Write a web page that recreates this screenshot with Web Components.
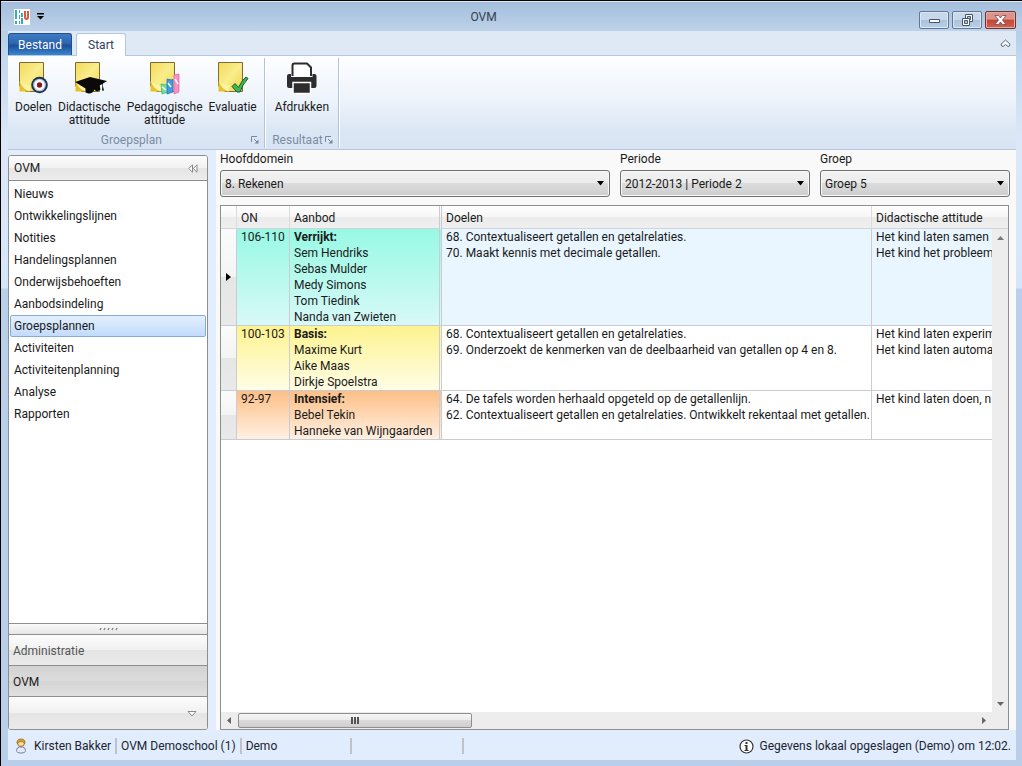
<!DOCTYPE html>
<html lang="nl">
<head>
<meta charset="utf-8">
<title>OVM</title>
<style>
html, body { margin: 0; height: 100%; }
body { font: 12px/16px Roboto, "Open Sans", "Noto Sans", sans-serif; color: #1a1a1a; overflow: hidden; }
</style>
</head>
<body>
<ovm-window>
  <ovm-titlebar slot="title">OVM</ovm-titlebar>
  <ovm-ribbon slot="ribbon">
    <ovm-ribbon-group label="Groepsplan">
      <ovm-ribbon-button icon="doelen">Doelen</ovm-ribbon-button>
      <ovm-ribbon-button icon="didactisch">Didactische<br>attitude</ovm-ribbon-button>
      <ovm-ribbon-button icon="pedagogisch">Pedagogische<br>attitude</ovm-ribbon-button>
      <ovm-ribbon-button icon="evaluatie">Evaluatie</ovm-ribbon-button>
    </ovm-ribbon-group>
    <ovm-ribbon-group label="Resultaat">
      <ovm-ribbon-button icon="afdrukken">Afdrukken</ovm-ribbon-button>
    </ovm-ribbon-group>
  </ovm-ribbon>
  <ovm-sidebar slot="side"></ovm-sidebar>
  <ovm-filters>
    <ovm-select label="Hoofddomein" value="8. Rekenen"></ovm-select>
    <ovm-select label="Periode" value="2012-2013 | Periode 2"></ovm-select>
    <ovm-select label="Groep" value="Groep 5"></ovm-select>
  </ovm-filters>
  <ovm-plan-grid></ovm-plan-grid>
  <ovm-statusbar slot="status"></ovm-statusbar>
</ovm-window>

<script>
const define = (name, html, setup) => {
  const template = document.createElement('template');
  template.innerHTML = '<style>*, *::before, *::after { box-sizing: border-box; } button { font: inherit; color: inherit; margin: 0; padding: 0; border: 0; background: none; } svg { display: block; }</style>' + html;
  customElements.define(name, class extends HTMLElement {
    constructor() {
      super();
      this.attachShadow({ mode: 'open' }).append(template.content.cloneNode(true));
    }
    connectedCallback() { if (setup) setup(this, this.shadowRoot); }
  });
};

/* Window frame */
define('ovm-window', `
<style>
:host { display: flex; flex-direction: column; height: 100vh; box-sizing: border-box; border: solid #000; border-width: 1px 0 0 1px;
  background: linear-gradient(#a9c4e0 0, #c4d8ef 60px, #dce8f8 140px, #d6e6fa 287px, #b9d0ea 288px, #b9cfe9 100%); }
.inner { flex: 1; min-height: 0; display: flex; flex-direction: column; padding: 0 6px 6px 7px; }
.work { flex: 1; min-height: 0; display: grid; grid-template-columns: 204px 1fr; background: #e4edfb; }
.side { padding: 5px 4px 0 0; display: grid; min-height: 0; }
.main { background: #f9f9f9; margin-left: 4px; padding: 0 6px 0 4px; display: flex; flex-direction: column; min-height: 0; min-width: 0; }
</style>
<slot name="title"></slot>
<div class="inner">
  <slot name="ribbon"></slot>
  <div class="work"><div class="side"><slot name="side"></slot></div><main class="main"><slot></slot></main></div>
  <slot name="status"></slot>
</div>`);

define('ovm-titlebar', `
<style>
:host { display: flex; align-items: center; height: 30px; padding: 0 6px 0 13px; border-top: 1px solid #dde9f5;
  background: linear-gradient(#a3bedb, #bed2ea); box-sizing: border-box; }
.left, .right { display: flex; align-items: center; gap: 3px; }
.mid { flex: 1; text-align: center; color: #33414f; }
.right { padding-top: 7px; }
button { width: 30px; height: 18px; border: 1px solid #5f7895; border-radius: 2px; box-shadow: inset 0 0 0 1px #dbe7f4; background: linear-gradient(#c7d8eb 50%, #abc2dc 50%, #b9cfe7); display: grid; place-items: center; }
.quick { width: 15px; border: 0; box-shadow: none; background: none; }
.close { width: 31px; background: linear-gradient(#dc9488 45%, #c54634 50%, #cf6250); border-color: #6d3235; box-shadow: inset 0 0 0 1px #e6aba2; }
</style>
<div class="left">
  <svg width="16" height="16" viewBox="0 0 16 16" aria-hidden="true"><path fill="#fff" d="M0 0h16v16H0z"/><path fill="#36a9d0" d="M1 1h2v9H1zM1 12h2v3H1zM5 1h1v3H5zM5 6h1v4H5zM5 12h1v3H5zM7 4h2v4H7zM7 9h2v6H7z"/><path fill="none" stroke="#e0583a" stroke-width="2" d="M11 2v6q0 2 1.500 2T14 8V2"/></svg>
  <button class="quick" aria-label="Snelle toegang"><svg width="7" height="7" viewBox="0 0 7 7"><path d="M0 0h7v1.500H0zM0 3h7L3.500 6.500z"/></svg></button>
</div>
<div class="mid"><slot></slot></div>
<div class="right">
  <button aria-label="Minimaliseren"><svg width="13" height="8" viewBox="0 0 13 8"><path d="M1.500 3.500h10v3h-10z" fill="#fff" stroke="#47566b"/></svg></button>
  <button aria-label="Verkleinen"><svg width="13" height="12" viewBox="0 0 13 12" fill="#fff" stroke="#47566b"><path d="M4.500 .5h7v7h-7z"/><path d="M6.500 2.500h3v3h-3z" fill="#b9cde5"/><path d="M1.500 4.500h7v7h-7z"/><path d="M3.500 6.500h3v3h-3z" fill="#b9cde5"/></svg></button>
  <button class="close" aria-label="Sluiten"><svg width="13" height="10" viewBox="0 0 13 10"><path d="M1 .5h3.500l2 2.500 2-2.500H12L8.500 5 12 9.500H8.500l-2-2.500-2 2.500H1L4.500 5z" fill="#fff" stroke="#6b4a55" stroke-width=".8"/></svg></button>
</div>`);

/* Ribbon */
define('ovm-ribbon', `
<style>
:host { display: block; flex: none; }
.tabs { display: flex; align-items: flex-end; gap: 4px; height: 25px; background: #dfe9f5; border-bottom: 1px solid #b5c8e0; padding-right: 5px; }
.tabs button { height: 22px; line-height: 22px; }
.file { width: 64px; color: #fff; border: 1px solid #1d4e97; border-bottom: 0; border-radius: 3px 3px 0 0; background: linear-gradient(#3f7cc5 0, #2d66ae 45%, #1e4f9a 55%, #3a86d0 100%); }
.start { width: 50px; background: #fdfeff; border: 1px solid #b5c8e0; border-bottom: 0; border-radius: 3px 3px 0 0; margin-bottom: -1px; color: #30405a; }
.tabs .start { height: 23px; }
.fold { margin-left: auto; align-self: center; }
.band { display: flex; height: 94px; padding-top: 2px; background: linear-gradient(#fdfeff 0, #eef4fb 45%, #dce7f5 80%, #d8e4f3); border-bottom: 1px solid #b5c8e0; }
</style>
<div class="tabs">
  <button class="file">Bestand</button><button class="start">Start</button>
  <button class="fold" aria-label="Lint inklappen"><svg width="11" height="9" viewBox="0 0 11 9"><path d="M5.500 1 10 5.200Q10 7.500 8 7.500L5.500 5.500 3 7.500Q1 7.500 1 5.200z" fill="#fff" stroke="#56657a"/></svg></button>
</div>
<div class="band"><slot></slot></div>`);

define('ovm-ribbon-group', `
<style>
:host { display: flex; flex-direction: column; border-right: 1px solid #b3c3d8; box-shadow: 1px 0 #fff; padding: 0 4px; margin-right: 1px; height: 90px; box-sizing: border-box; }
.items { flex: 1; display: flex; }
.foot { display: flex; height: 16px; align-items: center; color: #7b8ca5; }
.foot span { flex: 1; text-align: center; }
.foot button { width: 9px; }
</style>
<div class="items"><slot></slot></div>
<div class="foot"><span></span><button aria-label="Meer opties"><svg width="8" height="8" viewBox="0 0 8 8" fill="none" stroke="#7688a0"><path d="M.5 6V.5H6M3 3l3 3"/><path d="M7.500 3.500v4h-4z" fill="#7688a0" stroke="none"/></svg></button></div>`,
(host, root) => { root.querySelector('span').textContent = host.getAttribute('label'); });

const noteDefs = '<defs><linearGradient id="g" x1="0" y1="0" x2="1" y2="1"><stop offset="0" stop-color="#f3da5a"/><stop offset=".5" stop-color="#f9ed8c"/><stop offset="1" stop-color="#f0d348"/></linearGradient></defs>';
const note = '<path d="M2.500 1.500h24v29H9L2.500 25z" fill="url(#g)" stroke="#7d6a35"/><path d="M2.500 20q3 8 11 10.500h-11z" fill="#e8c02c"/><path d="M3 20q4 5 11 4-2 4-1 6.500Q6 29 3 20z" fill="#fdf3a0"/>';
const icons = {
  doelen: noteDefs + note + '<circle cx="22.500" cy="24" r="8.300" fill="#1e3450"/><circle cx="22.500" cy="24" r="6.300" fill="#b8cbe0"/><circle cx="22.500" cy="24" r="5" fill="#fff"/><circle cx="22.500" cy="24" r="2.700" fill="#8e1420"/>',
  didactisch: noteDefs + note + '<path d="M2 21l15-5 17 4-4 2.500v3l1 4h-2l.500-6.500-3 1.500 1 4q-4 3.500-6 0-2 4.500-6 4l-3-1v-4z" fill="#0a0a0a"/>',
  pedagogisch: noteDefs + note + '<g stroke-width=".7"><path d="M13 23l4 1 3-2v9l-6 2z" fill="#7bdc9c" stroke="#2eb567"/><path d="M19 18l5 1 1-1v13l-6 2z" fill="#3f9de4" stroke="#1b6dc0"/><path d="M26 14l5-1v18l-5 2z" fill="#f792c4" stroke="#ec5aa2"/><path d="M14 26l4 3M20 22l3 4M27 18l3 5" stroke="#fff" stroke-width="1.500"/></g>',
  evaluatie: noteDefs + note + '<path d="M16 25.500l3-3 3.500 4Q26 19 30 16l2 1.500Q26 24 24 31h-3z" fill="#44b556" stroke="#155f28"/>',
  afdrukken: '<path d="M7.500 15V4.500q0-2 2-2H22l4 4V15" fill="#fff" stroke="#2d2d30" stroke-width="2"/><path d="M4 13h2v3h21.500v-3h2q2 0 2 2v10q0 2-2 2H4q-2 0-2-2V15q0-2 2-2z" fill="#2d2d30"/><path d="M8 21.500h17.500v11H8z" fill="#2d2d30" stroke="#fff" stroke-width="1.500"/>'
};
define('ovm-ribbon-button', `
<style>
:host { display: block; }
button { display: flex; flex-direction: column; align-items: center; padding: 3px 3px 0; line-height: 13px; text-align: center; white-space: nowrap; height: 100%; gap: 7px; }
svg { overflow: visible; }
.wide { padding: 3px 5px 0; }
</style>
<button><svg width="33" height="33" viewBox="0 0 33 33" aria-hidden="true"></svg><span><slot></slot></span></button>`,
(host, root) => {
  const icon = host.getAttribute('icon');
  root.querySelector('svg').innerHTML = icons[icon];
  if (icon === 'afdrukken') root.querySelector('button').className = 'wide';
});

/* Navigation pane */
define('ovm-sidebar', `
<style>
:host { display: flex; flex-direction: column; border: 1px solid #8c8e91; border-radius: 3px; background: #fff; overflow: hidden; min-height: 0; }
header { display: flex; align-items: center; justify-content: space-between; height: 25px; flex: none; padding: 0 9px 0 5px; border-bottom: 1px solid #8c8e91; background: linear-gradient(#fcfcfc 0, #f1f1f1 50%, #e5e5e5 50%, #ececec); }
nav { flex: 1; padding: 2px 1px; }
a { display: block; height: 22px; line-height: 20px; padding: 0 3px; border: 1px solid transparent; border-radius: 2px; color: inherit; text-decoration: none; }
a[aria-current] { border-color: #84acdd; background: linear-gradient(#e3effd, #c2dcfc); }
.split { height: 11px; border-top: 1px solid #8c8e91; background: linear-gradient(#fafafa, #e6e6e6); display: grid; place-items: center; }
.bar { display: block; width: 100%; height: 31px; padding: 1px 4px 0; text-align: left; border-top: 1px solid #8c8e91; background: linear-gradient(#fdfdfd, #f0f0f0 50%, #e4e4e4 50%, #ebebeb); color: #555; }
.on { background: linear-gradient(#d2d2d2, #dcdcdc 50%, #d4d4d4 50%, #e0e0e0); color: #1a1a1a; }
.more { height: 33px; display: flex; justify-content: flex-end; align-items: center; padding-right: 10px; }
</style>
<header><span>OVM</span><button aria-label="Inklappen"><svg width="10" height="9" viewBox="0 0 10 9" fill="#fff" stroke="#8a8a8a"><path d="M4.500 .8v7.400L.8 4.500zM9 .8v7.400L5.300 4.500z"/></svg></button></header>
<nav></nav>
<div class="split"><svg width="19" height="4" viewBox="0 0 19 4"><path d="M1 3l1-2M5 3l1-2M9 3l1-2M13 3l1-2M17 3l1-2" stroke="#888" stroke-width="1.500"/></svg></div>
<button class="bar">Administratie</button>
<button class="bar on">OVM</button>
<button class="bar more" aria-label="Meer"><svg width="10" height="6" viewBox="0 0 10 6"><path d="M1 .5h8L5 5z" fill="#fff" stroke="#8a8a8a"/></svg></button>`,
(host, root) => {
  for (const text of ['Nieuws', 'Ontwikkelingslijnen', 'Notities', 'Handelingsplannen', 'Onderwijsbehoeften', 'Aanbodsindeling', 'Groepsplannen', 'Activiteiten', 'Activiteitenplanning', 'Analyse', 'Rapporten']) {
    const link = document.createElement('a');
    link.href = '#' + text.toLowerCase();
    link.textContent = text;
    if (text === 'Groepsplannen') link.setAttribute('aria-current', 'page');
    root.querySelector('nav').append(link);
  }
});

/* Filters */
define('ovm-filters', `
<style>
:host { display: grid; grid-template-columns: 1fr 190px 190px; gap: 10px; flex: none; }
</style><slot></slot>`);

define('ovm-select', `
<style>
:host { display: block; padding-top: 1px; }
label { display: block; height: 19px; }
select { appearance: none; display: block; width: 100%; height: 27px; padding: 0 20px 0 4px; font: inherit; color: inherit; border: 1px solid #707070; border-radius: 3px;
  background: url("data:image/svg+xml,%3Csvg xmlns='http://www.w3.org/2000/svg' width='7' height='5'%3E%3Cpath d='M0 0h7L3.500 4.500z'/%3E%3C/svg%3E") no-repeat right 5px center, linear-gradient(#f3f3f3, #ebebeb 50%, #dcdcdc 50%, #cdcdcd); box-shadow: inset 0 0 0 1px #f8f8f8; }
</style>
<label for="field"></label><select id="field"><option></option></select>`,
(host, root) => {
  root.querySelector('label').textContent = host.getAttribute('label');
  root.querySelector('option').textContent = host.getAttribute('value');
});

/* Plan table */
const plans = [
  ['106-110', 'Verrijkt:', ['Sem Hendriks', 'Sebas Mulder', 'Medy Simons', 'Tom Tiedink', 'Nanda van Zwieten'],
    ['68. Contextualiseert getallen en getalrelaties.', '70. Maakt kennis met decimale getallen.'], ['Het kind laten samen', 'Het kind het probleem'], 'mint'],
  ['100-103', 'Basis:', ['Maxime Kurt', 'Aike Maas', 'Dirkje Spoelstra'],
    ['68. Contextualiseert getallen en getalrelaties.', '69. Onderzoekt de kenmerken van de deelbaarheid van getallen op 4 en 8.'], ['Het kind laten experim', 'Het kind laten automa'], 'lemon'],
  ['92-97', 'Intensief:', ['Bebel Tekin', 'Hanneke van Wijngaarden'],
    ['64. De tafels worden herhaald opgeteld op de getallenlijn.', '62. Contextualiseert getallen en getalrelaties. Ontwikkelt rekentaal met getallen.'], ['Het kind laten doen, n'], 'peach']
];
define('ovm-plan-grid', `
<style>
:host { flex: 1; min-height: 0; margin: 8px 1px 0 0; display: grid; grid-template: 1fr 17px / minmax(0, 1fr) 16px; border: 1px solid #8c8e91; background: #fff; }
.view { overflow: hidden; }
table { width: 100%; table-layout: fixed; border-collapse: separate; border-spacing: 0; }
th { height: 23px; padding: 1px 4px 0; text-align: left; font-weight: 400; white-space: nowrap; }
th, .cap { background: linear-gradient(#fff 0, #f6f6f6 50%, #ebebeb 50%, #efefef); border-right: 1px solid #dcdcdc; border-bottom: 1px solid #d0d4da; }
td { padding: 0 4px; vertical-align: top; white-space: nowrap; overflow: hidden; border-right: 1px solid #c9cdd3; border-bottom: 1px solid #c9cdd3; }
td:last-child, th:last-child { padding-right: 0; border-right: 0; }
td p { margin: 0; }
td:first-child { background: linear-gradient(#fbfbfb, #f4f4f4 50%, #e6e6e6 50%, #e9e9e9); vertical-align: middle; }
th:nth-child(3), td:nth-child(3) { border-right: 3px double #c9cdd3; }
.mint td { background-color: #eaf6ff; }
.mint td:nth-child(2), .mint td:nth-child(3) { background: linear-gradient(#97f9e3, #d8f9f8); }
.lemon td:nth-child(2), .lemon td:nth-child(3) { background: linear-gradient(#fdf38f, #fffde6); }
.peach td:nth-child(2), .peach td:nth-child(3) { background: linear-gradient(#fdbf86, #fff0e2); }
.v { display: flex; flex-direction: column; background: #ededed; }
.cap { height: 23px; border-right: 0; }
.v button, .h button { display: grid; place-items: center; width: 16px; height: 17px; }
.v button:last-child { margin-top: auto; }
.h { display: flex; background: #ededed; }
.h button:last-child { margin-left: auto; }
.thumb { width: 234px; height: 15px; margin: 1px; border: 1px solid #8f8f8f; border-radius: 2px; background: linear-gradient(#f6f6f6, #ebebeb 50%, #dadada 50%, #cfcfcf); display: grid; place-items: center; }
.corner { background: #ededed; }
</style>
<div class="view"><table>
<colgroup><col style="width:16px"><col style="width:53px"><col style="width:152px"><col style="width:430px"><col></colgroup>
<thead><tr><th></th><th>ON</th><th>Aanbod</th><th>Doelen</th><th>Didactische attitude</th></tr></thead><tbody></tbody></table></div>
<div class="v"><div class="cap"></div>
<button aria-label="Omhoog"><svg width="7" height="4" viewBox="0 0 7 4"><path d="M0 4h7L3.500 0z" fill="#777"/></svg></button>
<button aria-label="Omlaag"><svg width="7" height="4" viewBox="0 0 7 4"><path d="M0 0h7L3.500 4z" fill="#666"/></svg></button></div>
<div class="h"><button aria-label="Naar links"><svg width="4" height="7" viewBox="0 0 4 7"><path d="M4 0v7L0 3.500z" fill="#666"/></svg></button>
<div class="thumb"><svg width="9" height="7" viewBox="0 0 9 7"><path d="M0 0h2v7H0zM3 0h2v7H3zM6 0h2v7H6z" fill="#555"/></svg></div>
<button aria-label="Naar rechts"><svg width="4" height="7" viewBox="0 0 4 7"><path d="M0 0v7l4-3.500z" fill="#666"/></svg></button></div>
<div class="corner"></div>`,
(host, root) => {
  const lines = list => list.map(t => '<p>' + t + '</p>').join('');
  root.querySelector('tbody').innerHTML = plans.map((p, i) =>
    `<tr class="${p[5]}"><td>${i ? '' : '<svg width="6" height="8" viewBox="0 0 6 8"><path d="M1 0v8l5-4z"/></svg>'}</td><td>${p[0]}</td><td><b>${p[1]}</b>${lines(p[2])}</td><td>${lines(p[3])}</td><td>${lines(p[4])}</td></tr>`).join('');
});

/* Status bar */
define('ovm-statusbar', `
<style>
:host { display: flex; align-items: center; height: 30px; box-sizing: border-box; flex: none; padding: 2px 5px 0; background: #e1edfd; color: #1b2430; white-space: nowrap; }
.item { border-right: 2px solid #bcc3cc; padding: 0 4px; }
.user { display: flex; gap: 5px; padding-left: 1px; }
.demo { width: 110px; }
.empty { width: 112px; height: 16px; }
.info { margin-left: auto; display: flex; align-items: center; gap: 5px; }
</style>
<div class="item user"><svg width="15" height="16" viewBox="0 0 15 16" aria-hidden="true"><path d="M2.500 12.500q0-3 3-3.500h3q3 .5 3 3.500 0 2.500-4.500 2.500t-4.500-2.500z" fill="#e4e6fa" stroke="#7a7fa8"/><circle cx="7" cy="5" r="3.500" fill="#fbdca6" stroke="#9a6a20"/><path d="M3 5.500Q2.500 1 7 1t4 4.500Q9 3.500 7 3.500T3 5.500z" fill="#e0a02c" stroke="#94661c" stroke-width=".7"/></svg><span>Kirsten Bakker</span></div>
<div class="item">OVM Demoschool (1)</div>
<div class="item demo">Demo</div>
<div class="item empty"></div>
<div class="info"><svg width="15" height="15" viewBox="0 0 15 15" aria-hidden="true"><circle cx="7.500" cy="7.500" r="6.500" fill="#fff" stroke="#333" stroke-width="1.200"/><path d="M6.500 3h2v2h-2zM5.500 6h3v5h1v1h-4v-1h1V7h-1z" fill="#333"/></svg><span>Gegevens lokaal opgeslagen (Demo) om 12:02.</span></div>`);
</script>
</body>
</html>
